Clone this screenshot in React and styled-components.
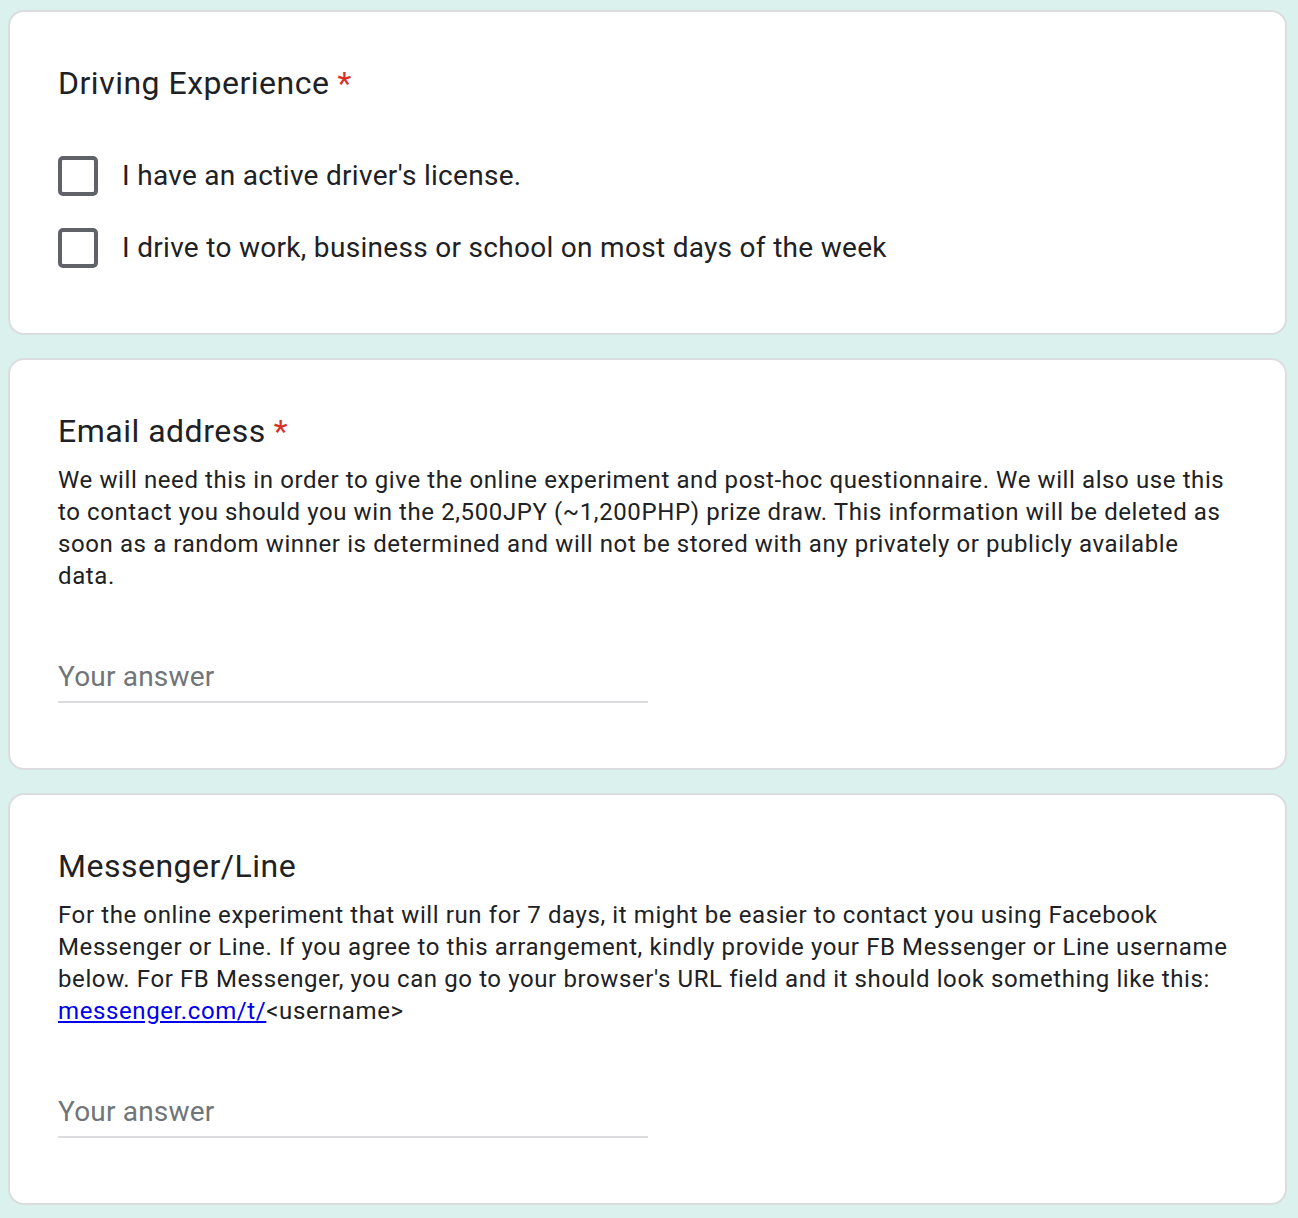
import React from "react";
import styled, { createGlobalStyle } from "styled-components";

const GlobalStyle = createGlobalStyle`
  html, body {
    margin: 0;
    padding: 0;
    background: #daf1ee;
  }
  body {
    font-family: Roboto, "Liberation Sans", Arial, sans-serif;
    color: #202124;
  }
`;

const Page = styled.div`
  display: flex;
  flex-direction: column;
  gap: 23px;
  padding: 10px 11px 12px 8px;
`;

const Card = styled.section`
  background: #fff;
  border: 2px solid #dadce0;
  border-radius: 16px;
  padding: 48px 48px ${({ bottom }) => bottom || 48}px;
`;

const Title = styled.h2`
  margin: 0;
  font-family: Roboto, "Liberation Sans", Arial, sans-serif;
  font-weight: 400;
  font-size: 32px;
  line-height: 46px;
  color: #202124;
  letter-spacing: 0.5px;
`;

const Required = styled.span`
  color: #d93025;
  margin-left: 8px;
`;

const Description = styled.p`
  margin: 10px 0 0;
  font-size: 24px;
  line-height: 32px;
  letter-spacing: 0.6px;
  color: #202124;

  a {
    color: #0000ee;
    text-decoration: underline;
  }
`;

const Options = styled.div`
  display: flex;
  flex-direction: column;
  gap: 32px;
  margin-top: 50px;
`;

const Option = styled.label`
  display: flex;
  align-items: center;
  gap: 24px;
  font-size: 28px;
  line-height: 40px;
  letter-spacing: 0.3px;
  color: #202124;
`;

const Box = styled.span`
  box-sizing: border-box;
  width: 40px;
  height: 40px;
  border: 4px solid #5f6368;
  border-radius: 5px;
  flex: none;
`;

const AnswerField = styled.div`
  width: 590px;
  margin-top: ${({ top }) => top}px;
  border-bottom: 2px solid #dadce0;
  padding-bottom: 4px;
  font-size: 28px;
  line-height: 40px;
  color: #70757a;
  letter-spacing: 0.2px;
`;

export default function App() {
  return (
    <Page>
      <GlobalStyle />
      <Card bottom={65}>
        <Title>
          Driving Experience<Required>*</Required>
        </Title>
        <Options>
          <Option>
            <Box />
            I have an active driver's license.
          </Option>
          <Option>
            <Box />
            I drive to work, business or school on most days of the week
          </Option>
        </Options>
      </Card>

      <Card bottom={65}>
        <Title>
          Email address<Required>*</Required>
        </Title>
        <Description>
          We will need this in order to give the online experiment and post-hoc
          questionnaire. We will also use this to contact you should you win the
          2,500JPY (~1,200PHP) prize draw. This information will be deleted as
          soon as a random winner is determined and will not be stored with any
          privately or publicly available data.
        </Description>
        <AnswerField top={65}>Your answer</AnswerField>
      </Card>

      <Card bottom={65}>
        <Title>Messenger/Line</Title>
        <Description>
          For the online experiment that will run for 7 days, it might be easier
          to contact you using Facebook Messenger or Line. If you agree to this
          arrangement, kindly provide your FB Messenger or Line username below.
          For FB Messenger, you can go to your browser's URL field and it should
          look something like this:{" "}
          <a href="#messenger">messenger.com/t/</a>&lt;username&gt;
        </Description>
        <AnswerField top={65}>Your answer</AnswerField>
      </Card>
    </Page>
  );
}
